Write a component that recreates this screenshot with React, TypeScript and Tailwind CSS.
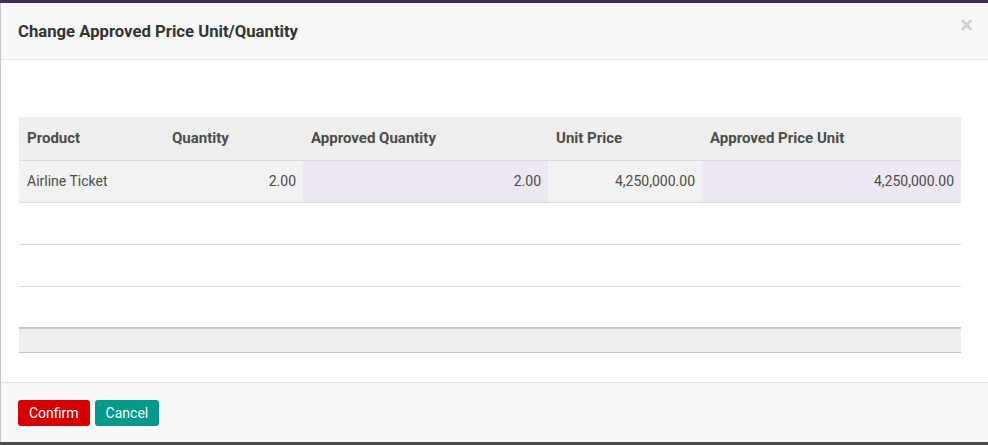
import React from "react";

export default function App() {
  const cell = "px-[8px] text-[14px] text-[#4c4c4c]";
  const head = "px-[8px] text-[15px] text-[#4c4c4c] text-left font-bold";
  return (
    <div
      className="w-[988px] h-[445px] bg-[#4a4a4a] flex flex-col overflow-hidden"
      style={{ fontFamily: "Roboto, 'Noto Sans', sans-serif" }}
    >
      {/* backdrop nav strip */}
      <div className="h-[3px] bg-[#3e2d56] shrink-0" />

      {/* Dialog */}
      <div className="h-[439px] w-[990px] bg-white border-l border-[#c8c8c8] flex flex-col shrink-0">
        {/* Header */}
        <div className="h-[57px] bg-[#f8f8f8] border-b border-[#e5e5e5] flex items-center justify-between pl-[17px] pr-[17px] shrink-0">
          <h4 className="text-[16.7px] font-bold text-[#333] pt-[1px]">
            Change Approved Price Unit/Quantity
          </h4>
          <span className="text-[#d0d0d0] text-[24px] font-bold leading-none -mt-[12px]">×</span>
        </div>

        {/* Body */}
        <div className="h-[322px] pt-[57px] pl-[18px] pr-[27px] shrink-0">
          <table className="w-[942px] border-collapse table-fixed">
            <colgroup>
              <col className="w-[145px]" />
              <col className="w-[139px]" />
              <col className="w-[245px]" />
              <col className="w-[154px]" />
              <col className="w-[259px]" />
            </colgroup>
            <thead>
              <tr className="h-[43px] bg-[#eeeeee] border-b border-[#dcdcdc]">
                <th className={head}>Product</th>
                <th className={head}>Quantity</th>
                <th className={head}>Approved Quantity</th>
                <th className={head}>Unit Price</th>
                <th className={head}>Approved Price Unit</th>
              </tr>
            </thead>
            <tbody>
              <tr className="h-[42px] bg-[#f2f2f2] border-b border-[#dcdcdc]">
                <td className={`${cell} text-left`}>Airline Ticket</td>
                <td className={`${cell} text-right pr-[7px]`}>2.00</td>
                <td className={`${cell} text-right pr-[7px] bg-[#ede7f4]`}>2.00</td>
                <td className={`${cell} text-right pr-[7px]`}>4,250,000.00</td>
                <td className={`${cell} text-right pr-[7px] bg-[#ede7f4]`}>4,250,000.00</td>
              </tr>
              {[0, 1, 2].map((i) => (
                <tr key={i} className="h-[42px] border-b border-[#dedede]">
                  <td colSpan={5} />
                </tr>
              ))}
            </tbody>
            <tfoot>
              <tr className="h-[24px] bg-[#eeeeee] border-t-2 border-b border-[#c8c8c8]">
                <td colSpan={5} />
              </tr>
            </tfoot>
          </table>
        </div>

        {/* Footer */}
        <div className="flex-1 bg-[#f8f8f8] border-t border-[#e5e5e5] flex items-center gap-[5px] pl-[17px] pt-[1px]">
          <button className="h-[26px] px-[11px] rounded-[3px] bg-[#d40000] text-white text-[14px]">
            Confirm
          </button>
          <button className="h-[26px] px-[11px] rounded-[3px] bg-[#00998a] text-white text-[14px]">
            Cancel
          </button>
        </div>
      </div>
    </div>
  );
}
